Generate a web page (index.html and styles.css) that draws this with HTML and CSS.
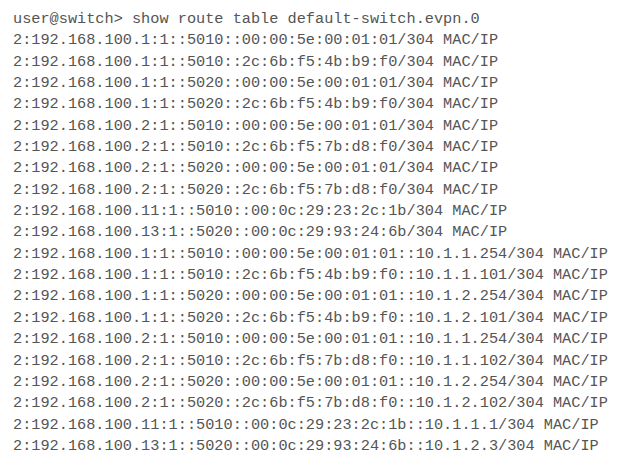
FILE: index.html
```html
<!DOCTYPE html>
<html>
<head>
<meta charset="utf-8">
<link rel="stylesheet" href="styles.css">
</head>
<body>
<pre class="terminal">user@switch&gt; show route table default-switch.evpn.0
2:192.168.100.1:1::5010::00:00:5e:00:01:01/304 MAC/IP
2:192.168.100.1:1::5010::2c:6b:f5:4b:b9:f0/304 MAC/IP
2:192.168.100.1:1::5020::00:00:5e:00:01:01/304 MAC/IP
2:192.168.100.1:1::5020::2c:6b:f5:4b:b9:f0/304 MAC/IP
2:192.168.100.2:1::5010::00:00:5e:00:01:01/304 MAC/IP
2:192.168.100.2:1::5010::2c:6b:f5:7b:d8:f0/304 MAC/IP
2:192.168.100.2:1::5020::00:00:5e:00:01:01/304 MAC/IP
2:192.168.100.2:1::5020::2c:6b:f5:7b:d8:f0/304 MAC/IP
2:192.168.100.11:1::5010::00:0c:29:23:2c:1b/304 MAC/IP
2:192.168.100.13:1::5020::00:0c:29:93:24:6b/304 MAC/IP
2:192.168.100.1:1::5010::00:00:5e:00:01:01::10.1.1.254/304 MAC/IP
2:192.168.100.1:1::5010::2c:6b:f5:4b:b9:f0::10.1.1.101/304 MAC/IP
2:192.168.100.1:1::5020::00:00:5e:00:01:01::10.1.2.254/304 MAC/IP
2:192.168.100.1:1::5020::2c:6b:f5:4b:b9:f0::10.1.2.101/304 MAC/IP
2:192.168.100.2:1::5010::00:00:5e:00:01:01::10.1.1.254/304 MAC/IP
2:192.168.100.2:1::5010::2c:6b:f5:7b:d8:f0::10.1.1.102/304 MAC/IP
2:192.168.100.2:1::5020::00:00:5e:00:01:01::10.1.2.254/304 MAC/IP
2:192.168.100.2:1::5020::2c:6b:f5:7b:d8:f0::10.1.2.102/304 MAC/IP
2:192.168.100.11:1::5010::00:0c:29:23:2c:1b::10.1.1.1/304 MAC/IP
2:192.168.100.13:1::5020::00:0c:29:93:24:6b::10.1.2.3/304 MAC/IP</pre>
</body>
</html>
```
FILE: styles.css
```css
html, body {
  margin: 0;
  padding: 0;
  background: #ffffff;
}

.terminal {
  margin: 0;
  padding: 9px 0 0 13px;
  font-family: "Courier New", "Nimbus Mono PS", "Nimbus Mono L", "FreeMono", "Liberation Mono", monospace;
  font-size: 15.25px;
  line-height: 21.35px;
  color: #555555;
  white-space: pre;
}
```
